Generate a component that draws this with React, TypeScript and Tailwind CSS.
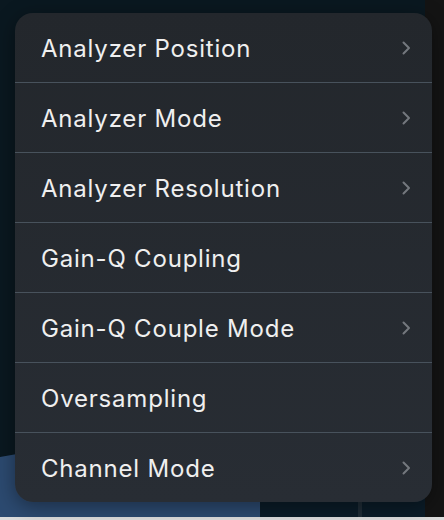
import React from "react";

const items: { label: string; sub: boolean }[] = [
  { label: "Analyzer Position", sub: true },
  { label: "Analyzer Mode", sub: true },
  { label: "Analyzer Resolution", sub: true },
  { label: "Gain-Q Coupling", sub: false },
  { label: "Gain-Q Couple Mode", sub: true },
  { label: "Oversampling", sub: false },
  { label: "Channel Mode", sub: true },
];

function Chevron() {
  return (
    <svg width="10" height="16" viewBox="0 0 10 16" fill="none">
      <path d="M2.5 2.5 L8 8 L2.5 13.5" stroke="#74787e" strokeWidth="2" strokeLinecap="round" strokeLinejoin="round" />
    </svg>
  );
}

export default function App() {
  return (
    <div className="relative w-[444px] h-[520px] overflow-hidden bg-[#0a1820]" style={{ fontFamily: "Inter, 'Noto Sans', sans-serif" }}>
      <svg className="absolute inset-0" width="444" height="520" viewBox="0 0 444 520">
        <rect x="425" y="0" width="19" height="520" fill="#141414" />
        <path d="M0 457 L60 446 L200 420 L425 400 L425 517 L0 517 Z" fill="#0b1c28" />
        <path d="M0 457 L40 450 L120 438 L260 420 L260 517 L0 517 Z" fill="#2c4a70" />
        <rect x="358" y="480" width="4" height="37" fill="#1f2c36" />
        <rect x="0" y="517" width="444" height="3" fill="#dcdcdc" />
      </svg>
      <div className="absolute left-[15px] top-[13px] w-[417px] rounded-[18px] overflow-hidden bg-gradient-to-b from-[#23272c] to-[#282d34] shadow-[0_4px_20px_rgba(0,0,0,0.4)]">
        {items.map((it, i) => (
          <div
            key={it.label}
            className={`flex items-center justify-between pl-[26px] pr-[21px] ${i === 0 ? "h-[69px]" : "h-[70px] border-t border-[#48525c]"}`}
          >
            <span className="text-[24px] leading-none pt-[2px] text-[#efefef] tracking-[0.8px]">{it.label}</span>
            {it.sub && <Chevron />}
          </div>
        ))}
      </div>
    </div>
  );
}
